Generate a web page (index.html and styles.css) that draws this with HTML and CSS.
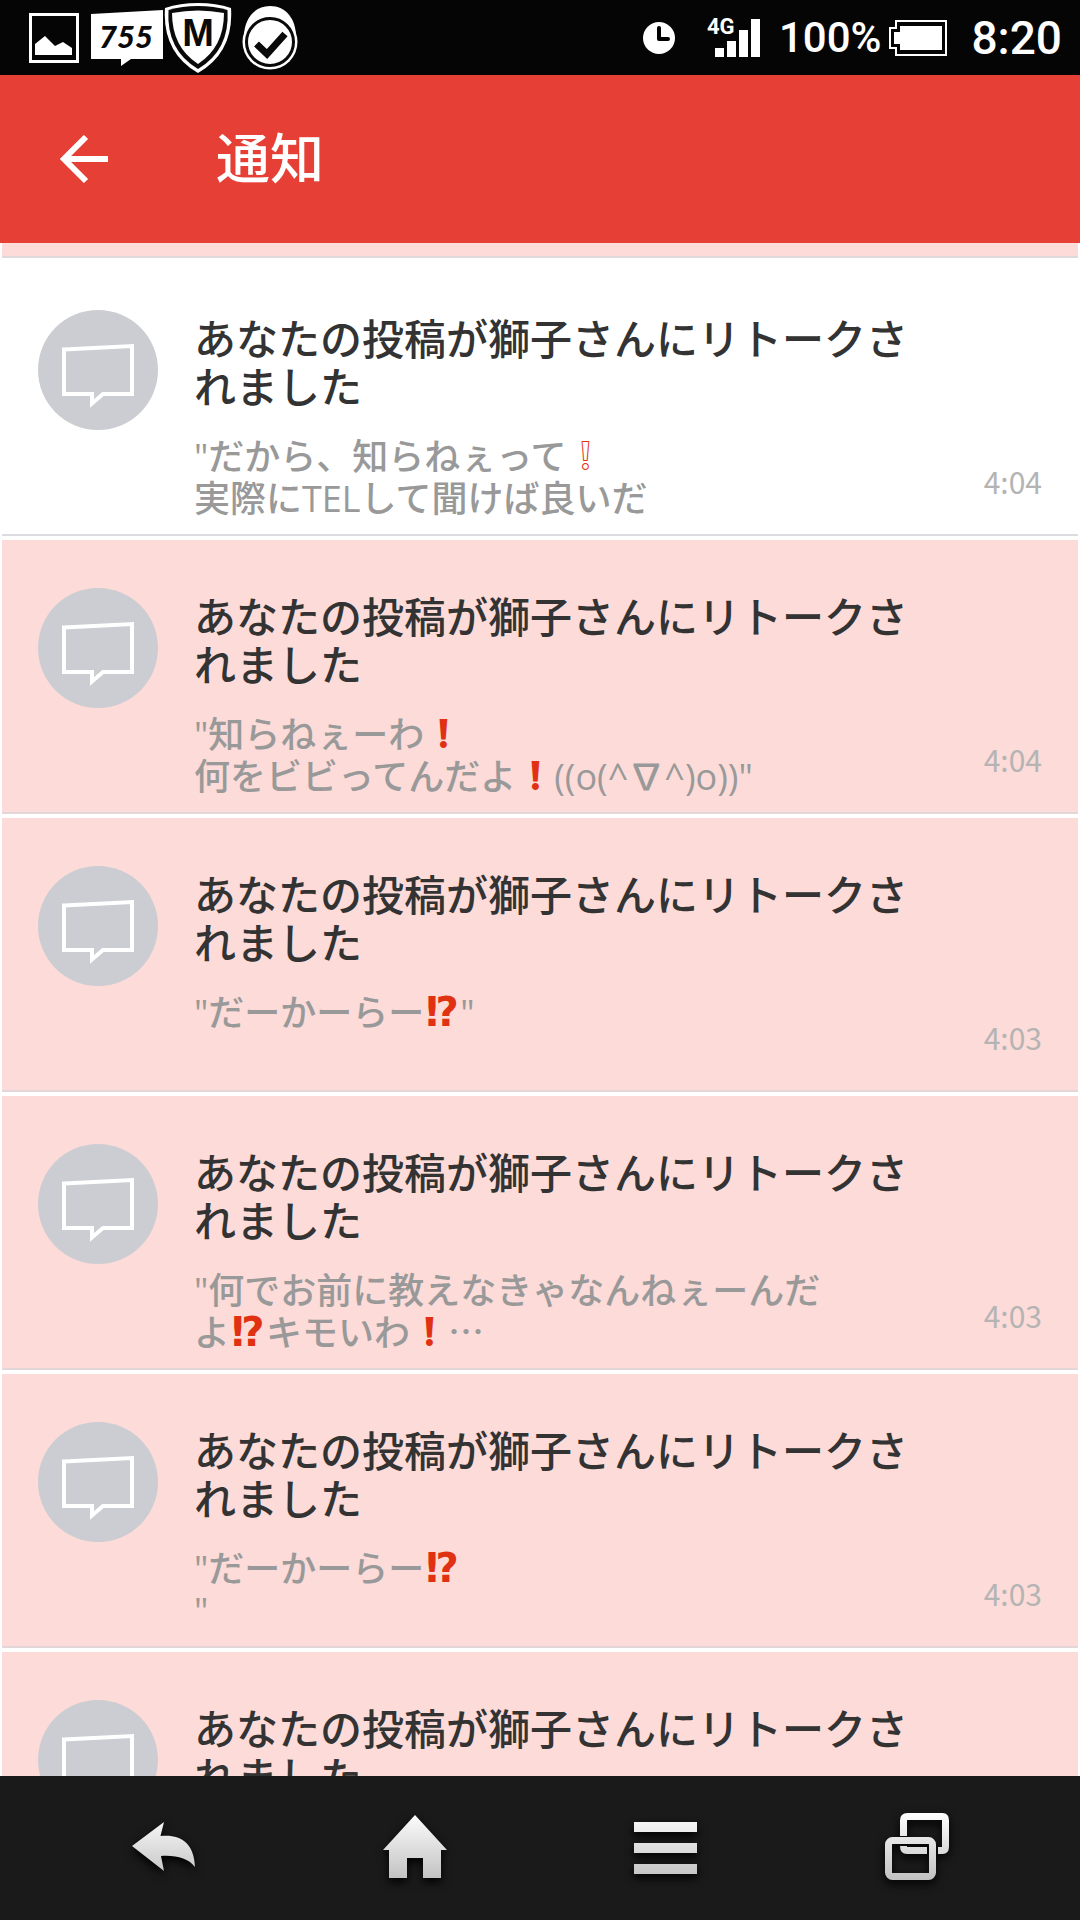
FILE: index.html
```html
<!DOCTYPE html>
<html lang="ja">
<head>
<meta charset="utf-8">
<meta name="viewport" content="width=device-width, initial-scale=1">
<title>通知</title>
<link rel="stylesheet" href="styles.css">
</head>
<body>
<svg class="defs" width="0" height="0" aria-hidden="true">
  <defs>
    <linearGradient id="metal" gradientUnits="userSpaceOnUse" x1="0" y1="0" x2="0" y2="72">
      <stop offset="0" stop-color="#fff"/>
      <stop offset="1" stop-color="#bdbdbd"/>
    </linearGradient>
    <symbol id="talk" viewBox="0 0 120 120">
      <path d="M26 39.500L94 36V84H65L54 93.500V84H26Z" fill="none" stroke="#fff" stroke-width="4"/>
    </symbol>
  </defs>
</svg>

<div class="status">
  <div class="status-left">
    <svg class="st-photo" width="50" height="50" viewBox="0 0 50 50">
      <path d="M1.500 1.500H48.500V48.500H1.500Z" fill="none" stroke="#fff" stroke-width="3"/>
      <path d="M6 42V31L16 23L26 33L34 29L43 35V42Z" fill="#fff"/>
    </svg>
    <svg class="st-talk" width="72" height="56" viewBox="0 0 72 56">
      <path d="M0 4L72 0V49H40L30 56V49H0Z" fill="#fff"/>
      <text x="35" y="38" text-anchor="middle" class="talk-text">755</text>
    </svg>
    <svg class="st-shield" width="70" height="72" viewBox="0 0 70 72">
      <path d="M35 1Q53 1 68 6Q71 50 35 71Q-1 50 2 6Q17 1 35 1Z" fill="#fff"/>
      <path d="M35 4Q51 4 64.500 8Q67 48 35 67Q3 48 5.500 8Q19 4 35 4Z" fill="#0a0a0a"/>
      <path d="M9 11Q35 6 61 11Q61 45 35 62Q9 45 9 11Z" fill="#fff"/>
      <text x="35" y="44" text-anchor="middle" class="shield-text">M</text>
    </svg>
    <svg class="st-check" width="56" height="66" viewBox="0 0 56 66">
      <path d="M2 32C2 14 12 1 28 1S54 14 54 32Z" fill="#fff"/>
      <circle cx="28" cy="37" r="27.500" fill="#fff"/>
      <circle cx="28" cy="37" r="23.500" fill="none" stroke="#0a0a0a" stroke-width="3"/>
      <path d="M14.500 39L25 49L43 29" fill="none" stroke="#0a0a0a" stroke-width="7"/>
    </svg>
  </div>
  <div class="status-right">
    <svg class="st-clock" width="32" height="32" viewBox="0 0 32 32">
      <circle cx="16" cy="16" r="16" fill="#fff"/>
      <path d="M16 6V17H25" fill="none" stroke="#000" stroke-width="4" stroke-linecap="round" stroke-linejoin="round"/>
    </svg>
    <svg class="st-signal" width="54" height="48" viewBox="0 0 54 48">
      <text x="0" y="20" class="net-text">4G</text>
      <path d="M8 34H17V43H8ZM20 27H29V43H20ZM32 16H41V43H32ZM44 5H53V43H44Z" fill="#fff"/>
    </svg>
    <span class="percent">100%</span>
    <svg class="st-battery" width="58" height="36" viewBox="0 0 58 36">
      <path d="M7 1H57V35H7V28H1V8H7Z" fill="none" stroke="#fff" stroke-width="2"/>
      <path d="M11 6H53V30H11V24H5V12H11Z" fill="#fff"/>
    </svg>
    <time class="clock">8:20</time>
  </div>
</div>

<header class="bar">
  <button class="back" type="button" aria-label="戻る">
    <svg width="48" height="48" viewBox="0 0 48 48">
      <path d="M26 2L4 24L26 46M4 24H48" fill="none" stroke="#fff" stroke-width="6"/>
    </svg>
  </button>
  <h1>通知</h1>
</header>

<main class="list">
  <div class="edge"></div>
  <article class="item read">
    <svg class="avatar" width="120" height="120"><use href="#talk"/></svg>
    <div class="body">
      <h2>あなたの投稿が獅子さんにリトークされました</h2>
      <p>"だから、知らねぇって<span class="mark">❕&#xFE0E;</span><br>実際にTELして聞けば良いだ</p>
    </div>
    <time>4:04</time>
  </article>
  <article class="item">
    <svg class="avatar" width="120" height="120"><use href="#talk"/></svg>
    <div class="body">
      <h2>あなたの投稿が獅子さんにリトークされました</h2>
      <p>"知らねぇーわ<span class="mark">❗&#xFE0E;</span><br>何をビビってんだよ<span class="mark">❗&#xFE0E;</span>((o(^∇^)o))"</p>
    </div>
    <time>4:04</time>
  </article>
  <article class="item">
    <svg class="avatar" width="120" height="120"><use href="#talk"/></svg>
    <div class="body">
      <h2>あなたの投稿が獅子さんにリトークされました</h2>
      <p>"だーかーらー<span class="mark double">⁉&#xFE0E;</span>"</p>
    </div>
    <time>4:03</time>
  </article>
  <article class="item">
    <svg class="avatar" width="120" height="120"><use href="#talk"/></svg>
    <div class="body">
      <h2>あなたの投稿が獅子さんにリトークされました</h2>
      <p>"何でお前に教えなきゃなんねぇーんだ<br>よ<span class="mark double">⁉&#xFE0E;</span>キモいわ<span class="mark">❗&#xFE0E;</span><span class="more">…</span></p>
    </div>
    <time>4:03</time>
  </article>
  <article class="item">
    <svg class="avatar" width="120" height="120"><use href="#talk"/></svg>
    <div class="body">
      <h2>あなたの投稿が獅子さんにリトークされました</h2>
      <p>"だーかーらー<span class="mark double">⁉&#xFE0E;</span><br>"</p>
    </div>
    <time>4:03</time>
  </article>
  <article class="item">
    <svg class="avatar" width="120" height="120"><use href="#talk"/></svg>
    <div class="body">
      <h2>あなたの投稿が獅子さんにリトークされました</h2>
    </div>
  </article>
</main>

<nav class="keys">
  <button type="button" aria-label="戻る">
    <svg width="72" height="72" viewBox="0 0 72 72">
      <path d="M4 34L36 10L32.500 24C52 22 66 30 67 55C60 46 48 43 33 44L36 59Z" fill="url(#metal)"/>
    </svg>
  </button>
  <button type="button" aria-label="ホーム">
    <svg width="72" height="72" viewBox="0 0 72 72">
      <path d="M36 3L68 38H62V66H44V46H28V66H10V38H4Z" fill="url(#metal)"/>
    </svg>
  </button>
  <button type="button" aria-label="メニュー">
    <svg width="72" height="72" viewBox="0 0 72 72">
      <path d="M4 10H67V20H4ZM4 31H67V41H4ZM4 52H67V62H4Z" fill="url(#metal)"/>
    </svg>
  </button>
  <button type="button" aria-label="最近使ったアプリ">
    <svg width="72" height="72" viewBox="0 0 72 72">
      <g fill="none" stroke="url(#metal)" stroke-width="7">
        <path d="M22.500 24V8.500Q22.500 4.500 26.500 4.500H61.500Q64.500 4.500 64.500 8.500V34.500Q64.500 38.500 61.500 38.500H57M46 38.500H26Q22.500 38.500 22.500 34"/>
        <rect x="7.500" y="28.500" width="44" height="36" rx="4"/>
      </g>
    </svg>
  </button>
</nav>
</body>
</html>
```

FILE: styles.css
```css
* {
  box-sizing: border-box;
}

body {
  margin: 0;
  height: 100vh;
  display: flex;
  flex-direction: column;
  background: #fff;
  font-family: "Noto Sans CJK JP", sans-serif;
  font-weight: 500;
}

button {
  border: 0;
  padding: 0;
  background: none;
  display: flex;
  align-items: center;
  justify-content: center;
}

svg {
  display: block;
  flex: none;
}

.defs {
  position: absolute;
}

/* Status bar */
.status {
  flex: none;
  height: 75px;
  padding: 0 18px 0 29px;
  display: flex;
  justify-content: space-between;
  background: #050505;
  color: #fff;
}

.status-left {
  display: flex;
  align-items: center;
}

.st-talk {
  margin-left: 12px;
}

.st-check {
  margin-left: 9px;
}

.talk-text {
  font: italic 900 31px "Lato", sans-serif;
  fill: #0a0a0a;
}

.shield-text {
  font: bold 38px "Liberation Sans", sans-serif;
  fill: #0a0a0a;
}

.status-right {
  display: flex;
  align-items: center;
  font-family: "Roboto", sans-serif;
}

.st-signal {
  margin-left: 32px;
  overflow: visible;
}

.net-text {
  font: bold 22px "Roboto", sans-serif;
  fill: #fff;
}

.percent {
  margin-left: 18px;
  font-size: 42px;
  line-height: 72px;
}

.st-battery {
  margin-left: 8px;
}

.clock {
  margin-left: 24px;
  font-size: 46px;
  line-height: 72px;
}

/* Title bar */
.bar {
  flex: none;
  height: 168px;
  padding: 0 60px;
  display: flex;
  align-items: center;
  gap: 108px;
  background: #e63f36;
  color: #fff;
}

.bar h1 {
  margin: 0;
  padding-bottom: 6px;
  font-size: 54px;
  line-height: 72px;
  font-weight: 500;
}

/* Notifications */
.list {
  flex: 1;
  min-height: 0;
  overflow: hidden;
  padding: 0 2px;
  display: flex;
  flex-direction: column;
  gap: 4px;
}

.edge {
  flex: none;
  height: 15px;
  background: #fcdbd8;
  border-bottom: 2px solid #dfd9dd;
}

.item {
  flex: none;
  height: 274px;
  padding: 48px 36px 0;
  display: flex;
  gap: 36px;
  background: #fcdbd8;
  border-bottom: 2px solid #e2d6d8;
}

.read {
  background: #fff;
  border-bottom-color: #dcdce0;
}

.avatar {
  border-radius: 50%;
  background: #cccdd2;
}

.body {
  flex: 0 1 750px;
  min-width: 0;
  padding-top: 3px;
}

.item h2 {
  margin: 0 0 27px;
  font-size: 42px;
  line-height: 48px;
  font-weight: 500;
  color: #333;
}

.item p {
  margin: 0;
  font-family: "Open Sans", "Noto Sans CJK JP", sans-serif;
  font-weight: 500;
  font-size: 36px;
  line-height: 42px;
  color: #999;
}

.mark {
  display: inline-block;
  width: 38px;
  text-align: center;
  font-family: "DejaVu Sans", sans-serif;
  font-size: 40px;
  line-height: 0;
  color: #e03212;
}

.double {
  width: 36px;
  font-weight: 700;
}

.more {
  font-family: "Noto Sans CJK JP", sans-serif;
  line-height: 0;
}

.item time {
  margin-left: auto;
  align-self: flex-end;
  padding-bottom: 32px;
  font-size: 30px;
  line-height: 42px;
  font-weight: 400;
  color: #b4b4b4;
}

/* System keys */
.keys {
  flex: none;
  height: 144px;
  padding: 0 38px;
  display: grid;
  grid-template-columns: repeat(4, 1fr);
  background: #1a1a1a;
}

.keys svg {
  filter: drop-shadow(0 4px 5px #000);
}
```
